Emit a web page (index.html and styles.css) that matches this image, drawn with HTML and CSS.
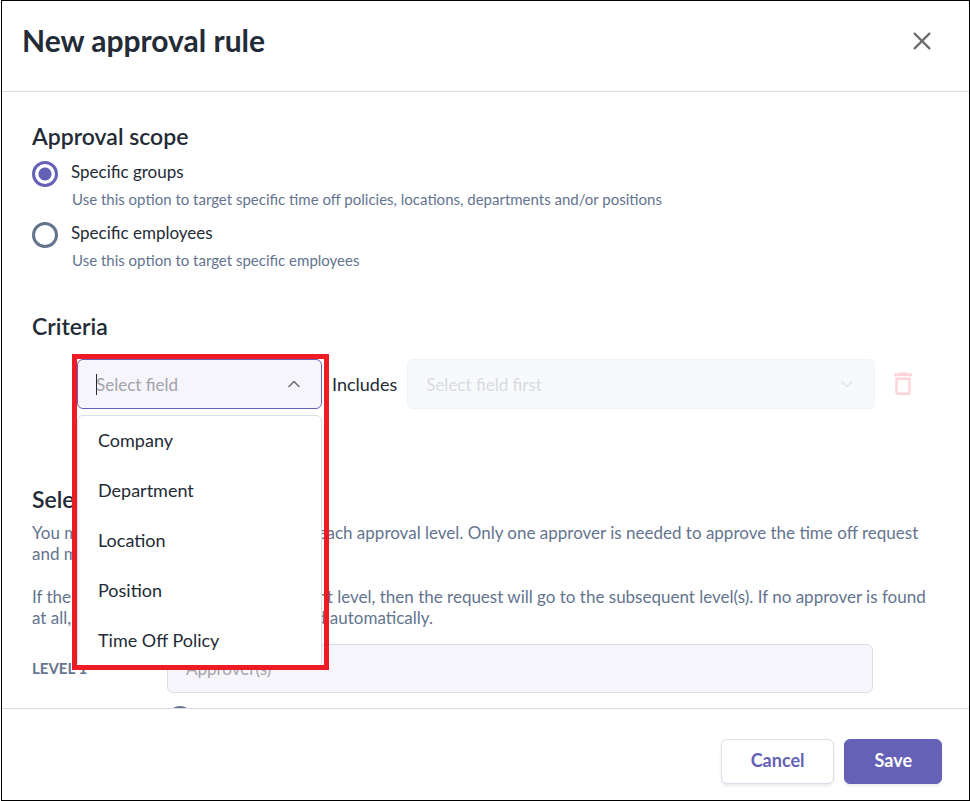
FILE: index.html
```html
<!DOCTYPE html>
<html lang="en">
<head>
<meta charset="utf-8">
<meta name="viewport" content="width=device-width, initial-scale=1">
<title>New approval rule</title>
<link rel="stylesheet" href="styles.css">
</head>
<body>
<form class="dialog">
  <header class="header">
    <h1 class="title">New approval rule</h1>
    <button class="icon-button" type="button" aria-label="Close">
      <svg width="20" height="20" viewBox="0 0 20 20" fill="none" stroke="#6c6c6c" stroke-width="2.2" stroke-linecap="round"><path d="M2.600 2.600 17.400 17.400M17.400 2.600 2.600 17.400"/></svg>
    </button>
  </header>

  <main class="body">
    <section class="scope">
      <h2 class="heading">Approval scope</h2>
      <div class="option">
        <input class="radio" type="radio" name="scope" id="scope-groups" checked>
        <div class="option-text">
          <label class="option-label" for="scope-groups">Specific groups</label>
          <p class="hint">Use this option to target specific time off policies, locations, departments and/or positions</p>
        </div>
      </div>
      <div class="option">
        <input class="radio" type="radio" name="scope" id="scope-employees">
        <div class="option-text">
          <label class="option-label" for="scope-employees">Specific employees</label>
          <p class="hint">Use this option to target specific employees</p>
        </div>
      </div>
    </section>

    <section class="criteria">
      <h2 class="heading">Criteria</h2>
      <div class="criteria-row">
        <div class="combo">
          <input class="field field-active" type="text" role="combobox" aria-expanded="true" aria-controls="field-list" aria-label="Field" placeholder="Select field">
          <span class="caret"></span>
          <svg class="chevron" width="14" height="14" viewBox="0 0 14 14" fill="none" stroke="#707078" stroke-width="1.600" stroke-linecap="round" stroke-linejoin="round"><path d="M2 9.500 7 4.500 12 9.500"/></svg>
          <ul class="menu" id="field-list" role="listbox">
            <li class="menu-item" role="option">Company</li>
            <li class="menu-item" role="option">Department</li>
            <li class="menu-item" role="option">Location</li>
            <li class="menu-item" role="option">Position</li>
            <li class="menu-item" role="option">Time Off Policy</li>
          </ul>
          <div class="highlight"></div>
        </div>
        <label class="includes" for="values">Includes</label>
        <div class="values">
          <select class="field field-disabled" id="values" disabled>
            <option>Select field first</option>
          </select>
          <svg class="chevron" width="14" height="14" viewBox="0 0 14 14" fill="none" stroke="#e6e7ea" stroke-width="1.600" stroke-linecap="round" stroke-linejoin="round"><path d="M2 4.500 7 9.500 12 4.500"/></svg>
        </div>
        <button class="icon-button" type="button" aria-label="Delete criterion" disabled>
          <svg width="18" height="24" viewBox="0 0 18 24" fill="none" stroke="#ffd4d6" stroke-width="2.400"><path d="M0 2.800H18" stroke-width="2.800"/><path d="M5 1.200H13" stroke-width="1.600"/><path d="M2.500 6.700H15.500V20.500a1.300 1.300 0 0 1-1.300 1.300H3.800A1.300 1.300 0 0 1 2.500 20.500Z"/></svg>
        </button>
      </div>
    </section>

    <section class="approvers">
      <h2 class="heading">Select approvers</h2>
      <p class="copy">You may assign multiple approvers for each approval level. Only one approver is needed to approve the time off request and move to the next level.</p>
      <p class="copy">If there is no approver found in a current level, then the request will go to the subsequent level(s). If no approver is found at all, then the request will be approved automatically.</p>
      <div class="level">
        <label class="level-label" for="level-1">LEVEL 1</label>
        <div class="level-fields">
          <input class="field field-approvers" id="level-1" type="text" placeholder="Approver(s)">
          <input class="radio level-mode" type="radio" name="level-mode" aria-label="Specific approver">
        </div>
      </div>
    </section>
  </main>

  <footer class="footer">
    <button class="button" type="button">Cancel</button>
    <button class="button button-primary" type="submit">Save</button>
  </footer>
</form>
</body>
</html>
```
FILE: styles.css
```css
* {
  box-sizing: border-box;
}

body {
  margin: 0;
  padding-left: 1px;
  background: #fff;
  color: #232b36;
  font-family: Lato, "Liberation Sans", sans-serif;
  font-size: 17px;
}

h1, h2, p, ul {
  margin: 0;
  padding: 0;
}

input, select, button {
  margin: 0;
  font: inherit;
}

.dialog {
  display: flex;
  flex-direction: column;
  height: 100vh;
  border: 1px solid #000;
}

.header {
  display: flex;
  align-items: flex-start;
  justify-content: space-between;
  flex: none;
  padding: 19px 37px 31px 20px;
  border-bottom: 1px solid #d9dce3;
}

.title {
  font-size: 30px;
  font-weight: 700;
  line-height: 40px;
}

.icon-button {
  display: flex;
  padding: 0;
  border: 0;
  background: none;
}

.header .icon-button {
  padding: 11px 0 9px;
}

.body {
  flex: 1;
  min-height: 0;
  overflow: hidden;
  padding: 30px 30px 0;
}

.heading {
  font-size: 23px;
  font-weight: 600;
  line-height: 28px;
}

.option {
  display: flex;
  gap: 13px;
  padding-top: 9px;
}

.radio {
  appearance: none;
  flex: none;
  width: 26px;
  height: 26px;
  margin-top: 2px;
  border: 3px solid #64748f;
  border-radius: 50%;
  background: #fff;
}

.radio:checked {
  border-color: #6461b6;
  background: radial-gradient(circle, #6461b6 6px, #fff 7px);
}

.option-label {
  display: block;
  line-height: 26px;
}

.hint {
  padding: 3px 0 1px 1px;
  color: #64748f;
  font-size: 15px;
  line-height: 22px;
}

.criteria {
  padding-top: 40px;
}

.criteria-row {
  display: flex;
  align-items: center;
  gap: 10px;
  padding: 19px 27px 0 45px;
}

.combo {
  position: relative;
  flex: 0 0 245px;
}

.includes {
  font-size: 18px;
}

.values {
  position: relative;
  flex: 1;
}

.criteria-row .icon-button {
  margin-left: 9px;
}

.field {
  appearance: none;
  display: block;
  width: 100%;
  height: 50px;
  padding: 0 18px;
  border: 1px solid #d9dee5;
  border-radius: 6px;
  background: #f6f5fb;
  color: #232b36;
}

.field::placeholder {
  color: #a3a4aa;
  opacity: 1;
}

.field-active {
  border-color: #6461b6;
}

.field-disabled {
  border-color: #f1f3f5;
  background: #f8f9fb;
  color: #d9dbdf;
  opacity: 1;
}

.field-approvers {
  height: 49px;
}

.caret {
  position: absolute;
  top: 15px;
  left: 19px;
  width: 1px;
  height: 21px;
  background: #232b36;
}

.chevron {
  position: absolute;
  top: 18px;
  right: 21px;
}

.menu {
  position: absolute;
  z-index: 1;
  top: 56px;
  left: 0;
  width: 100%;
  border: 1px solid #d9dee5;
  border-radius: 6px;
  background: #fff;
  list-style: none;
}

.menu-item {
  padding: 0 20px 2px;
  font-size: 18px;
  line-height: 48px;
}

.highlight {
  position: absolute;
  z-index: 2;
  inset: -5px -7px auto -5px;
  height: 316px;
  border: 5px solid #ed1c24;
  pointer-events: none;
}

.approvers {
  padding-top: 76px;
}

.copy {
  padding-top: 9px;
  color: #64748f;
  line-height: 21px;
}

.copy + .copy {
  padding-top: 22px;
}

.level {
  display: flex;
  padding: 16px 66px 0 0;
}

.level-label {
  flex: 0 0 135px;
  color: #64748f;
  font-size: 15px;
  font-weight: 700;
  line-height: 48px;
}

.level-fields {
  flex: 1;
}

.level-mode {
  display: block;
  margin-top: 13px;
}

.footer {
  display: flex;
  justify-content: flex-end;
  flex: none;
  gap: 10px;
  padding: 30px 27px 16px;
  border-top: 1px solid #d5dae3;
}

.button {
  height: 45px;
  padding: 0 29px 3px;
  border: 1px solid #d9dee8;
  border-radius: 6px;
  background: #fff;
  box-shadow: 0 2px 3px rgba(60, 60, 110, 0.1);
  color: #6461b6;
  font-size: 18px;
  font-weight: 700;
}

.button-primary {
  border-color: #6461b6;
  background: #6461b6;
  color: #fff;
}
```
